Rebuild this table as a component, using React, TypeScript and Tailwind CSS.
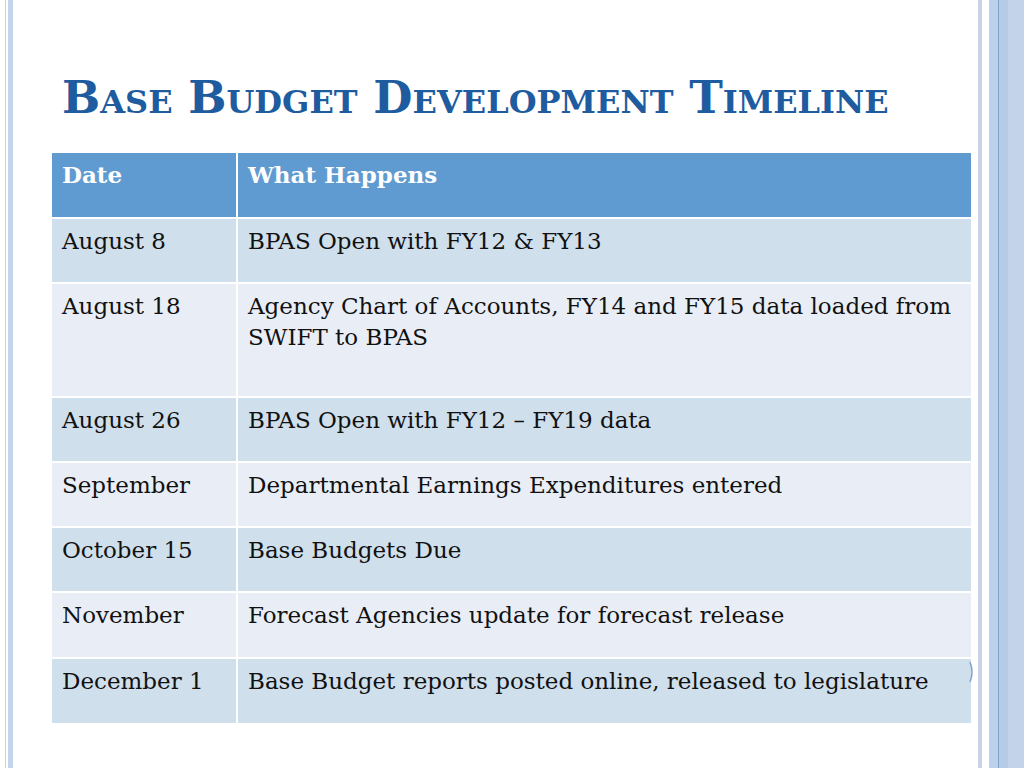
import React from "react";

const rows: { date: string; what: string; tall?: boolean }[] = [
  { date: "August 8", what: "BPAS Open with FY12 & FY13" },
  { date: "August 18", what: "Agency Chart of Accounts, FY14 and FY15 data loaded from SWIFT to BPAS", tall: true },
  { date: "August 26", what: "BPAS Open with FY12 \u2013 FY19 data" },
  { date: "September", what: "Departmental Earnings Expenditures  entered" },
  { date: "October 15", what: "Base Budgets Due" },
  { date: "November", what: "Forecast Agencies update for forecast release" },
  { date: "December 1", what: "Base Budget reports posted online, released to legislature" },
];

export default function App() {
  return (
    <div
      className="w-[1024px] h-[768px] bg-white flex overflow-hidden"
      style={{ fontFamily: '"DejaVu Serif", "Liberation Serif", serif' }}
    >
      {/* left decoration */}
      <div className="w-[5px] h-full" />
      <div className="w-[1px] h-full bg-[#c8d3e3]" />
      <div className="w-[2px] h-full" />
      <div className="w-[5px] h-full bg-[#c3d5ea]" />

      {/* main */}
      <div className="flex-1 flex flex-col pl-[39px] pr-[7px]">
        <h1 className="mt-[72px] ml-[10px] text-[45.2px] leading-[52px] font-bold text-[#1f5c9f] [font-variant:small-caps] whitespace-nowrap">
          Base Budget Development Timeline
        </h1>
        <div className="mt-[29px] flex flex-col gap-[2px] text-[23px] leading-[31px] text-[#111]">
          <div className="flex gap-[2px] h-[64px] bg-white">
            <div className="w-[184px] bg-[#5f9bd0] text-white font-bold pl-[10px] pt-[6px]">Date</div>
            <div className="flex-1 bg-[#5f9bd0] text-white font-bold pl-[10px] pt-[6px]">What Happens</div>
          </div>
          {rows.map((r, i) => {
            const bg = i % 2 === 0 ? "bg-[#d0dfec]" : "bg-[#e9eef6]";
            return (
              <div key={i} className={`flex gap-[2px] ${r.tall ? "h-[112px]" : i >= 5 ? "h-[64px]" : "h-[63px]"}`}>
                <div className={`w-[184px] ${bg} pl-[10px] pt-[7px] whitespace-nowrap`}>{r.date}</div>
                <div className={`flex-1 ${bg} pl-[10px] pr-[2px] pt-[7px] relative`}>
                  {r.what}
                  {i === 6 && (
                    <svg className="absolute right-[-4px] top-[2px]" width="6" height="22" viewBox="0 0 6 22">
                      <path d="M1 1 Q5 11 1 21" stroke="#7fa3cf" strokeWidth="1.5" fill="none" />
                    </svg>
                  )}
                </div>
              </div>
            );
          })}
        </div>
      </div>

      {/* right decoration */}
      <div className="w-[4px] h-full bg-[#c8d3e3]" />
      <div className="w-[7px] h-full" />
      <div className="w-[9px] h-full bg-[#bcd2ec]" />
      <div className="w-[1px] h-full bg-[#7fa3cf]" />
      <div className="w-[9px] h-full bg-[#b6cbe5]" />
      <div className="w-[16px] h-full bg-[#c3d4ea]" />
    </div>
  );
}
